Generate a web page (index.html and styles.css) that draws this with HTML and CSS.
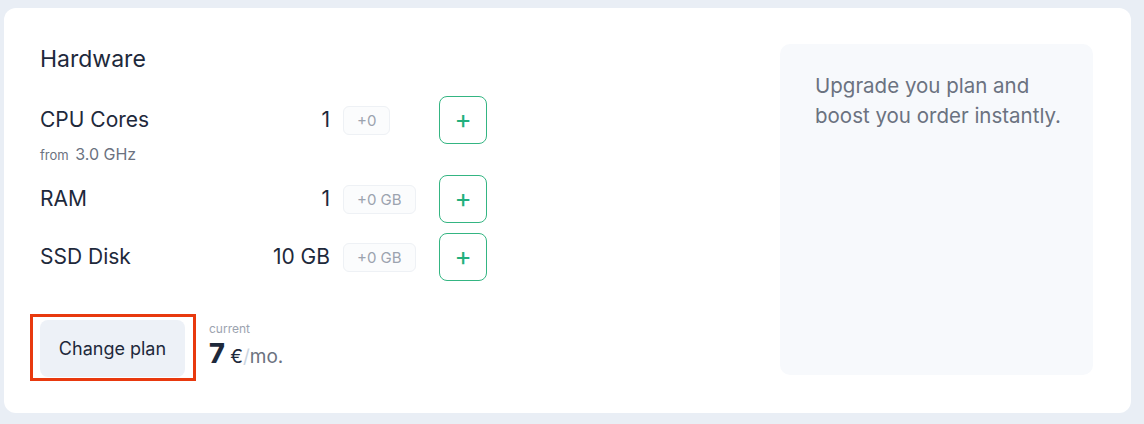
FILE: index.html
```html
<!DOCTYPE html>
<html>
<head>
    <meta charset="utf-8" />
    <title>Hardware</title>
    <link rel="stylesheet" href="styles.css">
</head>
<body>
    <div class="card">
        <div class="hardware">
            <h2>Hardware</h2>
            <ul class="specs">
                <li class="spec">
                    <div class="name">
                        <div class="label">CPU Cores</div>
                        <div class="sub"><small>from</small> 3.0 GHz</div>
                    </div>
                    <div class="value">1</div>
                    <div class="extra"><span class="badge">+0</span></div>
                    <button class="plus">+</button>
                </li>
                <li class="spec">
                    <div class="name">
                        <div class="label">RAM</div>
                    </div>
                    <div class="value">1</div>
                    <div class="extra"><span class="badge">+0 GB</span></div>
                    <button class="plus">+</button>
                </li>
                <li class="spec">
                    <div class="name">
                        <div class="label">SSD Disk</div>
                    </div>
                    <div class="value">10 GB</div>
                    <div class="extra"><span class="badge">+0 GB</span></div>
                    <button class="plus">+</button>
                </li>
            </ul>
            <div class="footer">
                <div class="highlight">
                    <button class="change">Change plan</button>
                </div>
                <div class="price">
                    <div class="current">current</div>
                    <div class="amount"><b>7</b> €<span class="slash">/</span><span class="per">mo.</span></div>
                </div>
            </div>
        </div>
        <div class="promo">
            <p>Upgrade you plan and boost you order instantly.</p>
        </div>
    </div>
</body>
</html>
```

FILE: styles.css
```css
body {
    margin: 8px 13px 0 4px;
    background: #e9eef5;
    font-family: Inter, "Noto Sans", sans-serif;
    color: #1e293b;
}

.card {
    display: flex;
    justify-content: space-between;
    background: #fff;
    border-radius: 12px;
    padding: 36px 38px 38px 36px;
    height: 405px;
    box-sizing: border-box;
}

h2 {
    margin: 1px 0 0;
    font-size: 23px;
    font-weight: 400;
    line-height: 28px;
}

ul {
    list-style: none;
    padding: 0;
    margin: 23px 0 0;
}

.spec {
    display: flex;
    align-items: flex-start;
}

.spec + .spec {
    margin-top: 10px;
}

.name {
    width: 200px;
}

.label {
    font-size: 21px;
    line-height: 48px;
}

.sub {
    font-size: 16px;
    line-height: 20px;
    color: #6b7280;
}

.sub small {
    font-size: 13px;
    margin-right: 2px;
}

.value {
    width: 90px;
    text-align: right;
    font-size: 21px;
    line-height: 48px;
}

.extra {
    width: 96px;
    padding-left: 13px;
    height: 48px;
    display: flex;
    align-items: center;
}

.badge {
    display: inline-block;
    font-size: 15px;
    line-height: 27px;
    padding: 0 13px;
    color: #9ca3af;
    border: 1px solid #eef1f5;
    background: #fbfcfd;
    border-radius: 6px;
}

.plus {
    width: 48px;
    height: 48px;
    border: 1px solid #34b582;
    border-radius: 8px;
    background: #fff;
    color: #22b07d;
    font-size: 26px;
    font-family: Inter, sans-serif;
    line-height: 1;
    padding: 0 0 3px;
}

.footer {
    display: flex;
    align-items: flex-start;
    margin-top: 33px;
    margin-left: -10px;
}

.highlight {
    /* review marker round the button */
    border: 3px solid #e8390e;
    padding: 3px 8px 1px 7px;
}

.change {
    display: block;
    width: 145px;
    height: 57px;
    border: none;
    border-radius: 8px;
    background: #edf1f7;
    color: #1e293b;
    font: 18px Inter, sans-serif;
}

.price {
    margin: 7px 0 0 13px;
}

.current {
    font-size: 12px;
    color: #9ca3af;
    line-height: 16px;
}

.amount {
    font-size: 19px;
    line-height: 34px;
}

.amount b {
    font-size: 27px;
    font-weight: 800;
}

.slash {
    color: #cbd5e1;
}

.per {
    color: #6b7280;
}

.promo {
    width: 313px;
    background: #f7f9fc;
    border-radius: 10px;
    padding: 27px 18px 25px 35px;
    box-sizing: border-box;
}

.promo p {
    margin: 0;
    font-size: 20.5px;
    line-height: 30px;
    color: #6b7280;
}
```
